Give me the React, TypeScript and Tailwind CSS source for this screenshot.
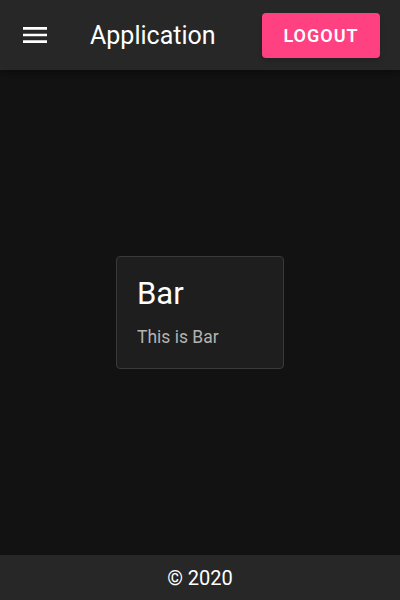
import React from 'react';

function MenuIcon() {
    return (
        <svg viewBox="0 0 24 24" className="h-8 w-8" fill="currentColor">
            <path d="M3 18h18v-2H3v2zm0-5h18v-2H3v2zm0-7v2h18V6H3z" />
        </svg>
    );
}

export default function App() {
    return (
        <div className="flex h-[600px] w-full flex-col bg-[#121212] text-white" style={{ fontFamily: 'Roboto, "Noto Sans", sans-serif' }}>
            {/* Top bar */}
            <header className="flex h-[70px] shrink-0 items-center bg-[#272727] pl-[19px] pr-5 shadow-[0_2px_4px_-1px_rgba(0,0,0,0.2),0_4px_5px_0_rgba(0,0,0,0.14)]">
                <button className="text-white">
                    <MenuIcon />
                </button>
                <h1 className="ml-[39px] flex-1 text-[25px] font-normal leading-none">Application</h1>
                <button className="h-[45px] w-[118px] rounded bg-[#ff4081] text-[18px] font-semibold uppercase tracking-[1px] text-white shadow-md">
                    Logout
                </button>
            </header>

            {/* Content */}
            <main className="flex flex-1 items-center justify-center">
                <div className="w-[168px] rounded border border-[#3a3a3a] bg-[#1e1e1e] px-5 pb-[19px] pt-[18px]">
                    <h2 className="text-[31px] font-normal leading-[1.2]">Bar</h2>
                    <p className="mt-[13px] text-[17.5px] leading-[1.4] text-[#b3b3b3]">This is Bar</p>
                </div>
            </main>

            {/* Footer */}
            <footer className="flex h-[45px] shrink-0 items-center justify-center bg-[#272727] text-[20px]">
                © 2020
            </footer>
        </div>
    );
}
